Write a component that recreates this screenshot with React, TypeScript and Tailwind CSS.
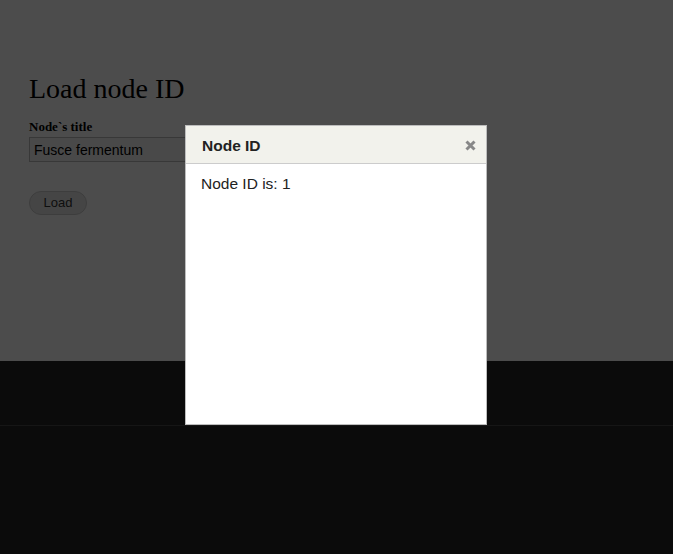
import React from "react";

const serif = { fontFamily: '"Liberation Serif", serif' };

const App = () => (
  <div className="relative w-[673px] h-[554px] overflow-hidden bg-[#252525]" style={{ fontFamily: '"Liberation Sans", Arial, sans-serif' }}>
    <div className="h-[361px] bg-white px-[29px] pt-[72px]">
      <h1 className="text-[28px] leading-[34px] text-black" style={serif}>Load node ID</h1>
      <div className="mt-[13px]">
        <label className="block text-[13px] font-bold leading-[16px] text-black" style={serif}>Node`s title</label>
        <input
          readOnly
          value="Fusce fermentum"
          className="mt-[2px] block w-[260px] h-[25px] border border-[#bbb] bg-[#f4f4f4] px-[4px] text-[14px] text-black outline-none"
        />
      </div>
      <button className="mt-[29px] h-[24px] w-[58px] rounded-full border border-[#ccc] bg-[#e8e8e8] text-[13px] text-[#333]">
        Load
      </button>
    </div>
    <div className="h-[65px] border-b border-[#4a4a4a]" />

    <div className="absolute inset-0 bg-[#000000b3]" />

    <div className="absolute left-[185px] top-[125px] w-[302px] h-[300px] border border-[#bdbdbd] bg-white">
      <div className="flex h-[38px] items-center justify-between border-b border-[#ccc] bg-[#f2f2ec] pl-[16px] pr-[10px]">
        <span className="mt-[2px] text-[15.5px] font-bold text-[#222]">Node ID</span>
        <svg width="11" height="11" viewBox="0 0 11 11" className="mt-[2px]">
          <path d="M1.5 1.5 L9.5 9.5 M9.5 1.5 L1.5 9.5" stroke="#888" strokeWidth="3" strokeLinecap="butt" />
        </svg>
      </div>
      <div className="px-[15px] pt-[8px] text-[15.5px] text-[#222]">Node ID is: 1</div>
    </div>
  </div>
);

export default App;
